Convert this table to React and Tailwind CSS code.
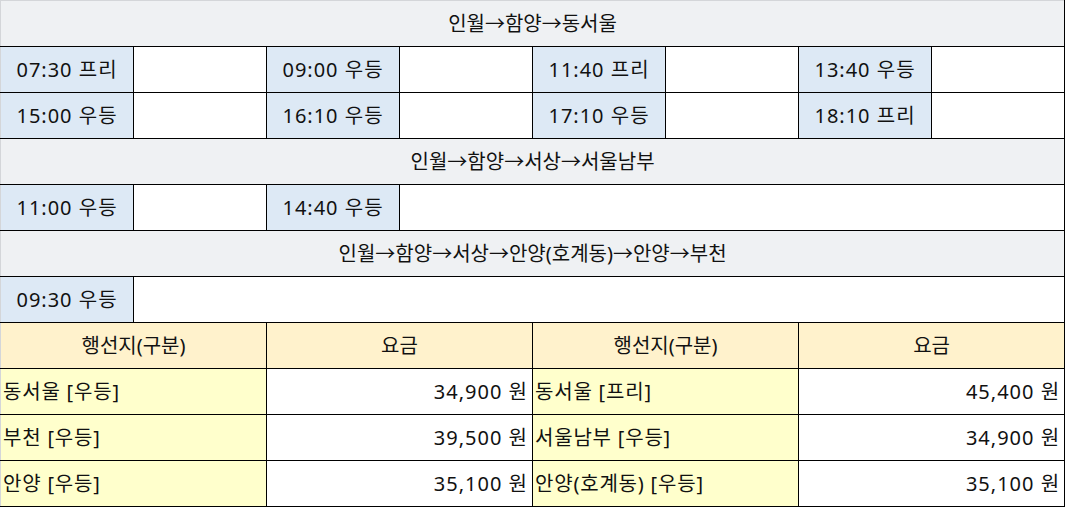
import React from 'react';

const head = 'h-[46px] bg-[#eff1f3] text-center border border-black';
const time = 'h-[46px] bg-[#dde9f5] text-center tracking-[1px] border border-black';
const blank = 'h-[46px] bg-white border border-black';

function TimeRow({ items }) {
  return (
    <tr>
      {items.map((t, i) => (
        <React.Fragment key={i}>
          <td className={`${time} ${i === 0 ? 'border-l-[#d4d6d9]' : ''}`}>{t}</td>
          <td className={blank}></td>
        </React.Fragment>
      ))}
    </tr>
  );
}

const fares = [
  ['동서울 [우등]', '34,900 원', '동서울 [프리]', '45,400 원'],
  ['부천 [우등]', '39,500 원', '서울남부 [우등]', '34,900 원'],
  ['안양 [우등]', '35,100 원', '안양(호계동) [우등]', '35,100 원'],
];

export default function App() {
  return (
    <div className="w-[1065px] h-[507px] bg-white text-[#111] text-[20px]" style={{ fontFamily: '"Noto Sans", "Noto Sans CJK KR", sans-serif' }}>
      <table className="table-fixed border-collapse w-[1065px]">
        <colgroup>
          {[0, 1, 2, 3, 4, 5, 6, 7].map((i) => (
            <col key={i} className="w-[133px]" />
          ))}
        </colgroup>
        <tbody>
          <tr>
            <td colSpan={8} className={`${head} border-t-[#d4d6d9] border-l-[#d4d6d9]`}>인월→함양→동서울</td>
          </tr>
          <TimeRow items={['07:30 프리', '09:00 우등', '11:40 프리', '13:40 우등']} />
          <TimeRow items={['15:00 우등', '16:10 우등', '17:10 우등', '18:10 프리']} />
          <tr>
            <td colSpan={8} className={`${head} border-l-[#d4d6d9]`}>인월→함양→서상→서울남부</td>
          </tr>
          <tr>
            <td className={`${time} border-l-[#d4d6d9]`}>11:00 우등</td>
            <td className={blank}></td>
            <td className={time}>14:40 우등</td>
            <td colSpan={5} className={blank}></td>
          </tr>
          <tr>
            <td colSpan={8} className={`${head} border-l-[#d4d6d9]`}>인월→함양→서상→안양(호계동)→안양→부천</td>
          </tr>
          <tr>
            <td className={`${time} border-l-[#d4d6d9]`}>09:30 우등</td>
            <td colSpan={7} className={blank}></td>
          </tr>
          <tr>
            {['행선지(구분)', '요금', '행선지(구분)', '요금'].map((t, i) => (
              <td
                key={i}
                colSpan={2}
                className={`h-[46px] bg-[#fff2cc] text-center border border-black ${i === 0 ? 'border-l-[#d4d6d9]' : ''}`}
              >
                {t}
              </td>
            ))}
          </tr>
          {fares.map((r, ri) => (
            <tr key={ri}>
              <td colSpan={2} className="h-[46px] bg-[#ffffcc] text-left pl-[2px] tracking-[0.8px] border border-black border-l-[#d4d6d9]">{r[0]}</td>
              <td colSpan={2} className="h-[46px] bg-white text-right pr-[4px] tracking-[1px] border border-black">{r[1]}</td>
              <td colSpan={2} className="h-[46px] bg-[#ffffcc] text-left pl-[2px] tracking-[0.8px] border border-black">{r[2]}</td>
              <td colSpan={2} className="h-[46px] bg-white text-right pr-[4px] tracking-[1px] border border-black">{r[3]}</td>
            </tr>
          ))}
        </tbody>
      </table>
    </div>
  );
}
